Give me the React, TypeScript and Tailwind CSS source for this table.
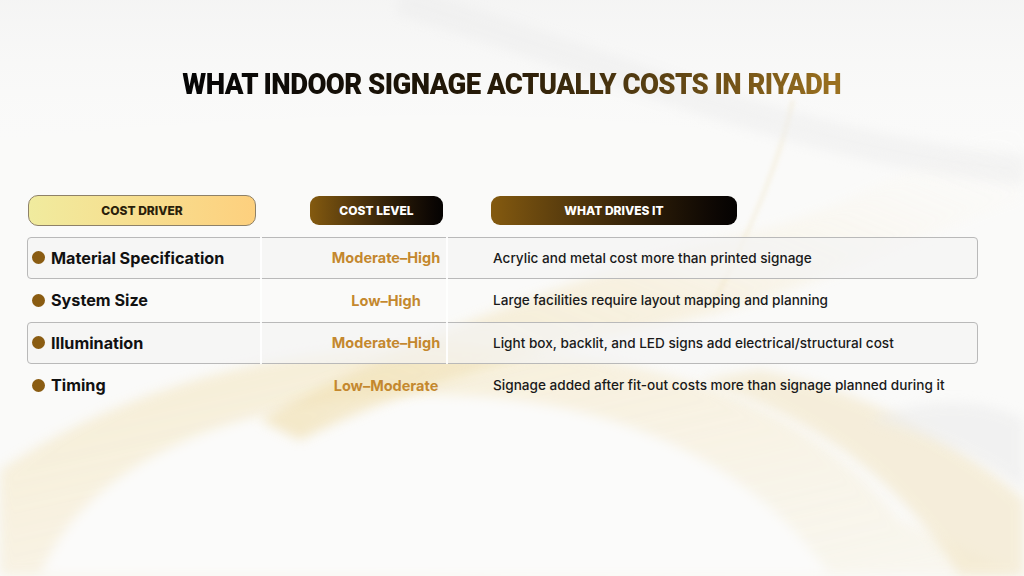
import React from "react";

type Row = { driver: string; level: string; why: string; boxed: boolean };

const rows: Row[] = [
  { driver: "Material Specification", level: "Moderate–High", why: "Acrylic and metal cost more than printed signage", boxed: true },
  { driver: "System Size", level: "Low–High", why: "Large facilities require layout mapping and planning", boxed: false },
  { driver: "Illumination", level: "Moderate–High", why: "Light box, backlit, and LED signs add electrical/structural cost", boxed: true },
  { driver: "Timing", level: "Low–Moderate", why: "Signage added after fit-out costs more than signage planned during it", boxed: false },
];

function Background() {
  return (
    <svg className="absolute inset-0 h-full w-full" viewBox="0 0 1024 576" preserveAspectRatio="none">
      <defs>
        <linearGradient id="g1" x1="0" y1="1" x2="1" y2="0">
          <stop offset="0" stopColor="#efdca8" stopOpacity="0.9" />
          <stop offset="0.5" stopColor="#f4e6c2" stopOpacity="0.6" />
          <stop offset="1" stopColor="#ffffff" stopOpacity="0" />
        </linearGradient>
        <linearGradient id="g2" x1="0" y1="0" x2="1" y2="1">
          <stop offset="0" stopColor="#f3e3b8" stopOpacity="0.8" />
          <stop offset="1" stopColor="#f6ecd2" stopOpacity="0.3" />
        </linearGradient>
        <linearGradient id="g3" x1="0" y1="0" x2="0" y2="1">
          <stop offset="0" stopColor="#eeeeee" stopOpacity="0.9" />
          <stop offset="1" stopColor="#ffffff" stopOpacity="0" />
        </linearGradient>
        <filter id="blur" x="-20%" y="-20%" width="140%" height="140%">
          <feGaussianBlur stdDeviation="6" />
        </filter>
        <filter id="blur2" x="-20%" y="-20%" width="140%" height="140%">
          <feGaussianBlur stdDeviation="2.5" />
        </filter>
      </defs>
      <rect width="1024" height="576" fill="#fafaf9" />
      <path d="M0 0 H1024 V200 C800 120 500 90 0 140 Z" fill="url(#g3)" opacity="0.5" />
      <path d="M0 470 C120 390 300 330 520 350 C700 365 820 420 900 520 L1024 576 L0 576 Z" fill="url(#g2)" filter="url(#blur)" opacity="0.75" />
      <path d="M40 576 C80 470 220 400 420 395 C620 392 760 470 830 576 Z" fill="#fbfbfa" filter="url(#blur)" />
      <path d="M260 420 C420 330 620 260 760 230 C840 210 920 160 1024 120 L1024 200 C900 240 800 300 640 330 C520 355 400 390 300 440 Z" fill="url(#g1)" filter="url(#blur)" opacity="0.7" />
      <path d="M700 380 C820 420 900 480 960 576 L1024 576 L1024 500 C960 440 860 390 760 370 Z" fill="#f1e2bc" opacity="0.5" filter="url(#blur)" />
      <path d="M870 420 C950 440 1000 470 1024 490 L1024 420 C990 400 930 395 870 420 Z" fill="#ececec" opacity="0.6" filter="url(#blur)" />
      <path d="M793 100 C780 160 755 220 715 300" stroke="#ecdcb0" strokeWidth="2" fill="none" filter="url(#blur2)" opacity="0.6" />
      <path d="M400 0 C600 60 800 150 1024 170" stroke="#ececec" strokeWidth="30" fill="none" filter="url(#blur)" opacity="0.5" />
    </svg>
  );
}

export default function App() {
  return (
    <div
      className="relative h-[576px] w-[1024px] overflow-hidden bg-white"
      style={{ fontFamily: "Inter, 'Noto Sans', sans-serif" }}
    >
      <Background />
      <div className="relative flex flex-col">
        <div className="flex justify-center pt-[67px]">
          <h1
            className="scale-x-[0.95] bg-gradient-to-r from-[#050505] via-[#2a1d08] to-[#9c7220] bg-clip-text text-[29px] font-black leading-[34px] tracking-[-0.6px] text-transparent"
            style={{ fontFamily: "Roboto, sans-serif" }}
          >
            WHAT INDOOR SIGNAGE ACTUALLY COSTS IN RIYADH
          </h1>
        </div>

        <div className="relative ml-[27px] mt-[94px] w-[951px]">
          <div className="grid grid-cols-[234px_186px_531px] items-center">
            <div className="flex">
              <div className="ml-[1px] flex h-[31px] w-[228px] items-center justify-center rounded-[10px] border border-[#8e8168] bg-gradient-to-r from-[#f0eb9e] to-[#fdd07e] text-[12px] font-extrabold text-[#2a1e0a]">
                COST DRIVER
              </div>
            </div>
            <div className="flex">
              <div className="ml-[49px] flex h-[29px] w-[133px] items-center justify-center rounded-[9px] bg-gradient-to-r from-[#845a0f] to-[#050302] text-[12px] font-extrabold text-white">
                COST LEVEL
              </div>
            </div>
            <div className="flex">
              <div className="ml-[44px] flex h-[29px] w-[246px] items-center justify-center rounded-[9px] bg-gradient-to-r from-[#845a0f] to-[#050302] text-[12px] font-extrabold text-white">
                WHAT DRIVES IT
              </div>
            </div>
          </div>

          <div className="relative mt-[11px]">
            {rows.map((r, i) => (
              <div
                key={i}
                className={
                  r.boxed
                    ? "grid h-[42px] grid-cols-[234px_186px_531px] items-center rounded-[4px] border border-[#b9b9b9] bg-[#f3f3f3]/70"
                    : "grid h-[43px] grid-cols-[234px_186px_531px] items-center border border-transparent"
                }
              >
                <div className="flex items-center gap-[6px] pl-[4px]">
                  <span className="h-[13px] w-[13px] rounded-full bg-[#8a5c12]" />
                  <span className="text-[16.2px] font-bold text-[#111111]">{r.driver}</span>
                </div>
                <div className="pl-[62px] text-center text-[14.5px] font-bold text-[#c4882e]">{r.level}</div>
                <div className="pl-[45px] text-[13.6px] font-medium text-[#1a1a1a]">{r.why}</div>
              </div>
            ))}
            <div className="absolute left-[233px] top-0 h-[127px] w-[2px] bg-white/90" />
            <div className="absolute left-[419px] top-0 h-[127px] w-[2px] bg-white/90" />
          </div>
        </div>
      </div>
    </div>
  );
}
